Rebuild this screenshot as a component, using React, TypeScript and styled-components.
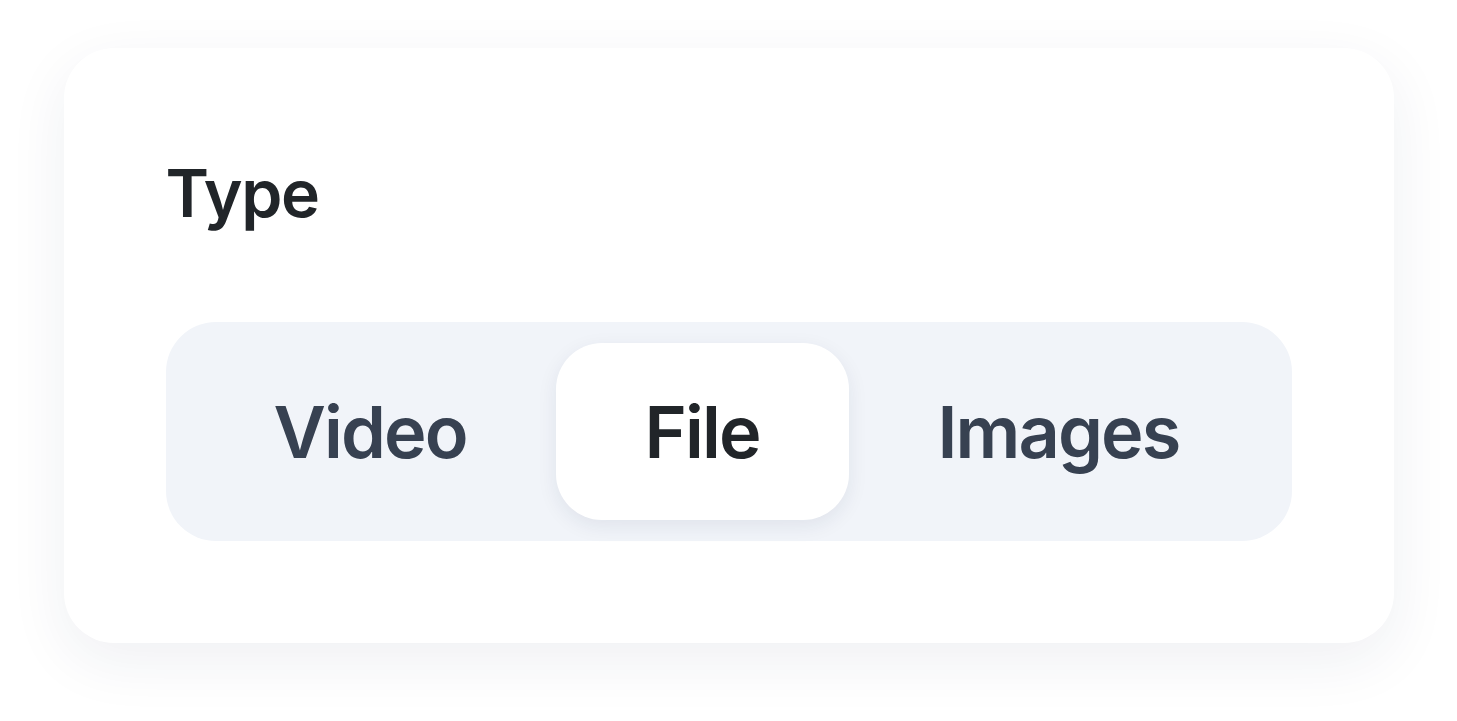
import * as React from "react";
import styled, { createGlobalStyle } from "styled-components";

const GlobalStyle = createGlobalStyle`
  html, body {
    margin: 0;
    padding: 0;
    background: #ffffff;
  }
  body {
    font-family: Inter, "Noto Sans", "Liberation Sans", sans-serif;
    -webkit-font-smoothing: antialiased;
  }
`;

const SPage = styled.div`
  min-height: 100vh;
  box-sizing: border-box;
  display: flex;
  justify-content: center;
  align-items: flex-start;
  padding-top: 48px;
`;

const SCard = styled.div`
  width: 1330px;
  box-sizing: border-box;
  padding: 106px 102px 102px;
  background: #ffffff;
  border-radius: 50px;
  box-shadow: 0 18px 60px rgba(30, 41, 80, 0.07);
`;

const SLabel = styled.div`
  font-size: 66px;
  line-height: 79px;
  font-weight: 600;
  color: #212529;
  letter-spacing: -1.3px;
  margin-bottom: 89px;
`;

const STrack = styled.div`
  display: flex;
  align-items: center;
  padding: 21px 20px 21px 19px;
  background: #f1f4f9;
  border-radius: 50px;
`;

const STab = styled.button<{ active?: boolean }>`
  height: 177px;
  padding: 0 89px;
  border: 0;
  border-radius: 46px;
  font-family: inherit;
  font-size: 72px;
  font-weight: 600;
  letter-spacing: -1.9px;
  cursor: pointer;
  background: ${p => (p.active ? "#ffffff" : "transparent")};
  color: ${p => (p.active ? "#212529" : "#374151")};
  box-shadow: ${p =>
    p.active ? "0 6px 20px rgba(30, 41, 80, 0.08)" : "none"};
`;

const tabs = ["Video", "File", "Images"];

const App = () => {
  const [selected, setSelected] = React.useState("File");
  return (
    <SPage>
      <GlobalStyle />
      <SCard>
        <SLabel>{"Type"}</SLabel>
        <STrack>
          {tabs.map(t => (
            <STab key={t} active={t === selected} onClick={() => setSelected(t)}>
              {t}
            </STab>
          ))}
        </STrack>
      </SCard>
    </SPage>
  );
};

export default App;
